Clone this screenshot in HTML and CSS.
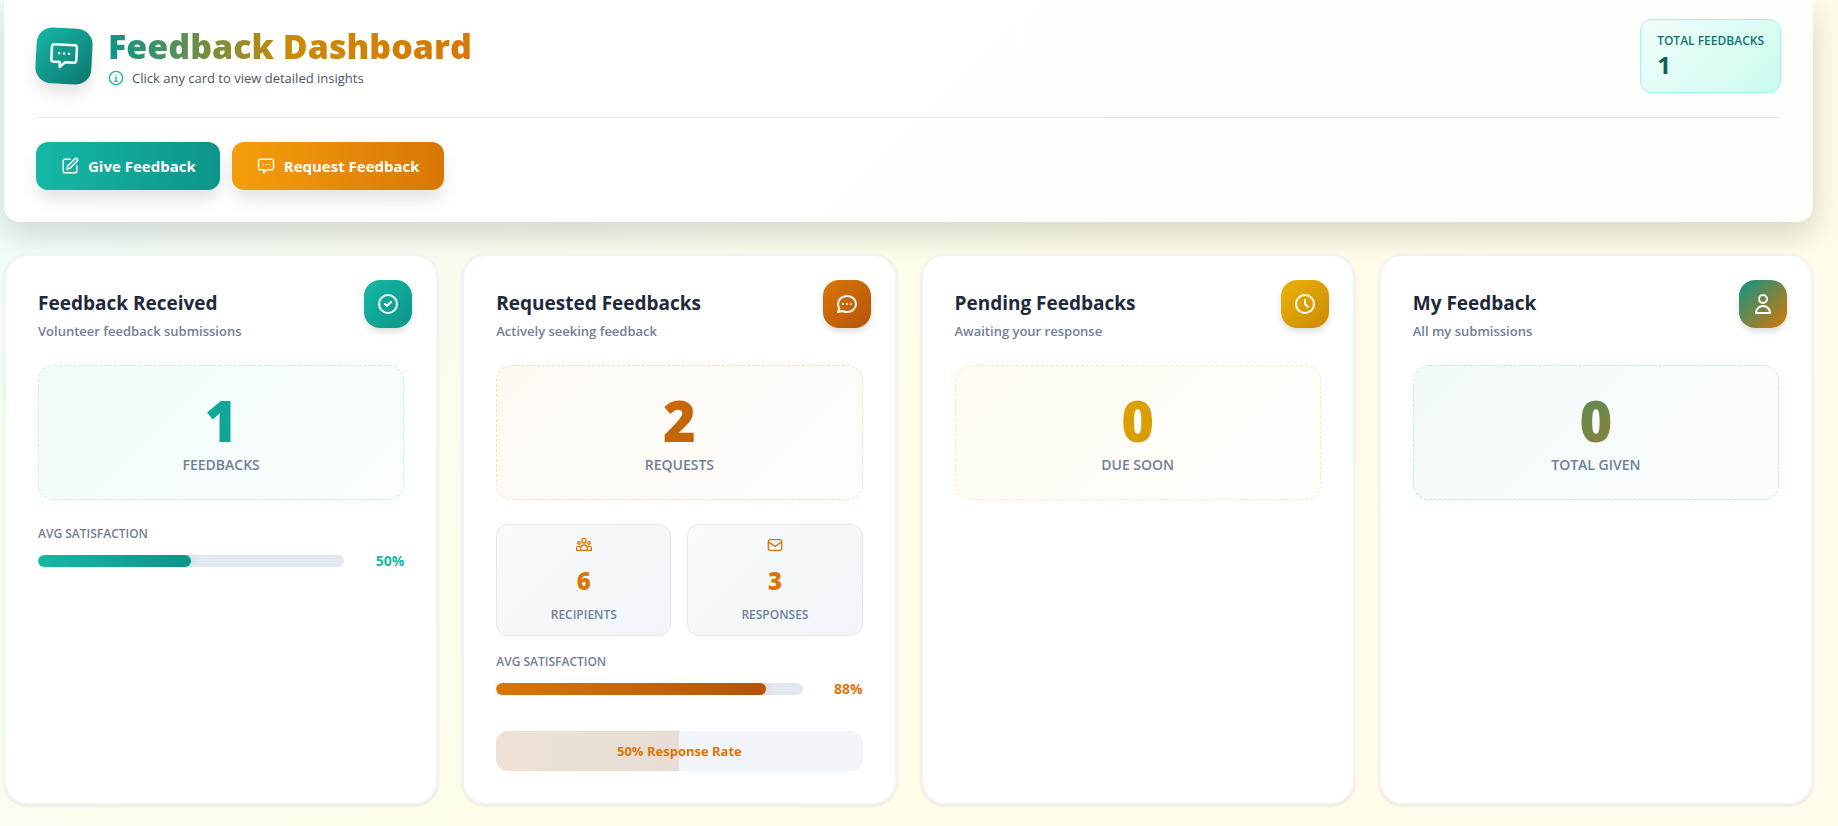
FILE: index.html
```html
<!DOCTYPE html>
<html lang="en">
<head>
    <meta charset="UTF-8">
    <meta name="viewport" content="width=device-width, initial-scale=1.0">
    <title>Feedback Dashboard</title>
    <link rel="stylesheet" href="styles.css">
</head>
<body>
    <!-- Shared icons -->
    <svg class="icon-defs" aria-hidden="true">
        <symbol id="icon-message" viewBox="0 0 24 24">
            <path d="M4 3h16a2 2 0 0 1 2 2v10a2 2 0 0 1-2 2h-7l-4 4v-4H4a2 2 0 0 1-2-2V5a2 2 0 0 1 2-2z"/>
            <path d="M8 10h.01M12 10h.01M16 10h.01"/>
        </symbol>
        <symbol id="icon-info" viewBox="0 0 24 24">
            <circle cx="12" cy="12" r="10"/>
            <path d="M11 11h1v6M10 17h4M12 7.500h.01"/>
        </symbol>
        <symbol id="icon-edit" viewBox="0 0 24 24">
            <path d="M12 3H5a2 2 0 0 0-2 2v14a2 2 0 0 0 2 2h14a2 2 0 0 0 2-2v-7"/>
            <path d="M18.500 2.500a2.100 2.100 0 0 1 3 3L12 15l-4 1 1-4z"/>
        </symbol>
        <symbol id="icon-check" viewBox="0 0 24 24">
            <circle cx="12" cy="12" r="9"/>
            <path d="M9 12l2 2 4-4"/>
        </symbol>
        <symbol id="icon-chat" viewBox="0 0 24 24">
            <path d="M12 4c5 0 9 3.600 9 8s-4 8-9 8c-1.500 0-3-.3-4.200-.9L3 20l1.400-3.700C3.500 15 3 13.600 3 12c0-4.400 4-8 9-8z"/>
            <path d="M8 12h.01M12 12h.01M16 12h.01"/>
        </symbol>
        <symbol id="icon-clock" viewBox="0 0 24 24">
            <circle cx="12" cy="12" r="9"/>
            <path d="M12 8v4l3 3"/>
        </symbol>
        <symbol id="icon-user" viewBox="0 0 24 24">
            <circle cx="12" cy="7" r="4"/>
            <path d="M12 14a7 7 0 0 0-7 7h14a7 7 0 0 0-7-7z"/>
        </symbol>
        <symbol id="icon-team" viewBox="0 0 24 24">
            <rect x="9" y="2" width="6" height="7" rx="3"/>
            <circle cx="4.500" cy="9" r="2"/>
            <circle cx="19.500" cy="9" r="2"/>
            <path d="M7 20v-3a5 5 0 0 1 10 0v3zM7 14H4a3 3 0 0 0-3 3v3h6M17 14h3a3 3 0 0 1 3 3v3h-6"/>
        </symbol>
        <symbol id="icon-mail" viewBox="0 0 24 24">
            <rect x="2" y="4" width="20" height="16" rx="3"/>
            <path d="M3 8l9 6 9-6"/>
        </symbol>
    </svg>

    <main class="dashboard">
        <header class="header">
            <div class="header-top">
                <div class="brand">
                    <div class="brand-icon"><svg class="icon"><use href="#icon-message"/></svg></div>
                    <div class="brand-text">
                        <h1>Feedback Dashboard</h1>
                        <p class="hint"><svg class="icon"><use href="#icon-info"/></svg>Click any card to view detailed insights</p>
                    </div>
                </div>
                <div class="total-badge">
                    <span class="total-label">TOTAL FEEDBACKS</span>
                    <span class="total-value">1</span>
                </div>
            </div>
            <div class="actions">
                <button type="button" class="btn btn-give"><svg class="icon"><use href="#icon-edit"/></svg>Give Feedback</button>
                <button type="button" class="btn btn-request"><svg class="icon"><use href="#icon-message"/></svg>Request Feedback</button>
            </div>
        </header>

        <section class="cards">
            <article class="card received">
                <div class="card-icon"><svg class="icon"><use href="#icon-check"/></svg></div>
                <h2>Feedback Received</h2>
                <p class="card-subtitle">Volunteer feedback submissions</p>
                <div class="count-box">
                    <div class="count">1</div>
                    <div class="count-label">FEEDBACKS</div>
                </div>
                <div class="satisfaction">
                    <div class="small-label">AVG SATISFACTION</div>
                    <div class="bar-row">
                        <div class="bar"><div class="bar-fill" style="width: 50%"></div></div>
                        <span class="percent">50%</span>
                    </div>
                </div>
            </article>

            <article class="card requested">
                <div class="card-icon"><svg class="icon"><use href="#icon-chat"/></svg></div>
                <h2>Requested Feedbacks</h2>
                <p class="card-subtitle">Actively seeking feedback</p>
                <div class="count-box">
                    <div class="count">2</div>
                    <div class="count-label">REQUESTS</div>
                </div>
                <div class="stats">
                    <div class="stat">
                        <svg class="icon"><use href="#icon-team"/></svg>
                        <div class="stat-value">6</div>
                        <div class="small-label">RECIPIENTS</div>
                    </div>
                    <div class="stat">
                        <svg class="icon"><use href="#icon-mail"/></svg>
                        <div class="stat-value">3</div>
                        <div class="small-label">RESPONSES</div>
                    </div>
                </div>
                <div class="satisfaction">
                    <div class="small-label">AVG SATISFACTION</div>
                    <div class="bar-row">
                        <div class="bar"><div class="bar-fill" style="width: 88%"></div></div>
                        <span class="percent">88%</span>
                    </div>
                </div>
                <div class="response-rate">
                    <div class="response-fill" style="width: 50%"></div>
                    <span>50% Response Rate</span>
                </div>
            </article>

            <article class="card pending">
                <div class="card-icon"><svg class="icon"><use href="#icon-clock"/></svg></div>
                <h2>Pending Feedbacks</h2>
                <p class="card-subtitle">Awaiting your response</p>
                <div class="count-box">
                    <div class="count">0</div>
                    <div class="count-label">DUE SOON</div>
                </div>
            </article>

            <article class="card mine">
                <div class="card-icon"><svg class="icon"><use href="#icon-user"/></svg></div>
                <h2>My Feedback</h2>
                <p class="card-subtitle">All my submissions</p>
                <div class="count-box">
                    <div class="count">0</div>
                    <div class="count-label">TOTAL GIVEN</div>
                </div>
            </article>
        </section>
    </main>
</body>
</html>
```
FILE: styles.css
```css
* {
    box-sizing: border-box;
}

body {
    margin: 0;
    min-height: 100vh;
    padding: 0 25px 20px 4px;
    font-family: "Segoe UI", "Open Sans", "Noto Sans", sans-serif;
    color: #1e293b;
    background: linear-gradient(135deg, #f0fdfa 0%, #fefce8 50%, #fffbeb 100%);
}

h1, h2, p {
    margin: 0;
}

.icon-defs {
    display: none;
}

.icon {
    flex: none;
    fill: none;
    stroke: currentColor;
    stroke-width: 2;
    stroke-linecap: round;
    stroke-linejoin: round;
}

/* Header */
.header {
    padding: 19px 32px 32px;
    margin-bottom: 32px;
    border-radius: 0 0 16px 16px;
    background: linear-gradient(135deg, #ffffff 0%, #fefefc 100%);
    box-shadow: 0 12px 32px rgba(0, 0, 0, 0.16);
}

.header-top {
    display: flex;
    justify-content: space-between;
    align-items: center;
    padding-bottom: 24px;
    border-bottom: 1px solid #e5e7eb;
}

.brand {
    display: flex;
    align-items: center;
    gap: 16px;
}

.brand-text {
    padding-top: 4px;
}

.brand-icon {
    display: flex;
    align-items: center;
    justify-content: center;
    width: 56px;
    height: 56px;
    border-radius: 16px;
    color: #fff;
    background: linear-gradient(135deg, #14b8a6, #0f766e);
    box-shadow: 0 10px 15px rgba(0, 0, 0, 0.1);
    transform: rotate(3deg);
}

.brand-icon .icon {
    width: 30px;
    height: 30px;
}

h1 {
    font-size: 34px;
    line-height: 40px;
    font-weight: 800;
    color: transparent;
    background: linear-gradient(90deg, #0d9488, #ca8a04 50%, #d97706);
    -webkit-background-clip: text;
    background-clip: text;
}

.hint {
    display: flex;
    align-items: center;
    gap: 8px;
    font-size: 13px;
    line-height: 24px;
    color: #4b5563;
}

.hint .icon {
    width: 16px;
    height: 16px;
    color: #14b8a6;
}

.total-badge {
    display: flex;
    flex-direction: column;
    padding: 13px 16px 11px;
    border: 1px solid #99f6e4;
    border-radius: 12px;
    background: linear-gradient(135deg, #f0fdfa, #ccfbf1);
}

.total-label {
    font-size: 12px;
    line-height: 16px;
    font-weight: 600;
    color: #0f766e;
}

.total-value {
    font-size: 24px;
    line-height: 32px;
    font-weight: 700;
    color: #115e59;
}

.actions {
    display: flex;
    gap: 12px;
    padding-top: 24px;
}

.btn {
    display: flex;
    align-items: center;
    gap: 8px;
    height: 48px;
    padding: 0 24px;
    border: none;
    border-radius: 12px;
    font-family: inherit;
    font-size: 15px;
    font-weight: 700;
    color: #fff;
    cursor: pointer;
    box-shadow: 0 10px 15px rgba(0, 0, 0, 0.1);
}

.btn .icon {
    width: 18px;
    height: 18px;
    margin: 1px;
}

.btn-give {
    background: linear-gradient(90deg, #14b8a6, #0d9488);
}

.btn-request {
    background: linear-gradient(90deg, #f59e0b, #d97706);
}

/* Cards */
.cards {
    display: grid;
    grid-template-columns: repeat(4, 1fr);
    gap: 24px;
}

.card {
    position: relative;
    padding: 32px;
    border: 2px solid #f1f3f5;
    border-radius: 24px;
    background: #fff;
    box-shadow: 0 1px 3px rgba(0, 0, 0, 0.1);
}

.card-icon {
    position: absolute;
    top: 24px;
    right: 24px;
    display: flex;
    align-items: center;
    justify-content: center;
    width: 48px;
    height: 48px;
    border-radius: 16px;
    color: #fff;
    box-shadow: 0 4px 6px rgba(0, 0, 0, 0.12);
}

.card-icon .icon {
    width: 24px;
    height: 24px;
}

.card h2 {
    font-size: 19px;
    line-height: 30px;
    font-weight: 700;
}

.card-subtitle {
    margin-top: 3px;
    font-size: 13px;
    line-height: 20px;
    font-weight: 600;
    color: #718096;
}

.count-box {
    margin-top: 24px;
    padding: 24px;
    border: 1px dashed;
    border-radius: 16px;
    text-align: center;
}

.count {
    font-size: 56px;
    line-height: 60px;
    font-weight: 800;
    color: transparent;
    -webkit-background-clip: text;
    background-clip: text;
}

.count-label {
    margin-top: 5px;
    font-size: 14px;
    line-height: 20px;
    font-weight: 600;
    color: #718096;
}

.small-label {
    font-size: 12px;
    line-height: 20px;
    font-weight: 600;
    color: #718096;
}

.satisfaction {
    margin-top: 24px;
}

.bar-row {
    display: flex;
    align-items: center;
    gap: 12px;
    margin-top: 7px;
}

.bar {
    flex: 1;
    height: 12px;
    border-radius: 6px;
    overflow: hidden;
    background: #e2e8f0;
}

.bar-fill {
    height: 100%;
    border-radius: 6px;
}

.percent {
    width: 48px;
    font-size: 14px;
    line-height: 20px;
    font-weight: 700;
    text-align: right;
}

.stats {
    display: grid;
    grid-template-columns: 1fr 1fr;
    gap: 16px;
    margin-top: 24px;
}

.stat {
    display: flex;
    flex-direction: column;
    align-items: center;
    padding: 12px 12px 10px;
    border: 1px solid #e2e8f0;
    border-radius: 12px;
    background: linear-gradient(135deg, #f8fafc, #f1f5f9);
    color: #d97706;
}

.stat .icon {
    width: 16px;
    height: 16px;
}

.stat-value {
    margin: 10px 0 6px;
    font-size: 24px;
    line-height: 36px;
    font-weight: 800;
}

.stats + .satisfaction {
    margin-top: 16px;
}

.response-rate {
    position: relative;
    margin-top: 32px;
    border-radius: 12px;
    overflow: hidden;
    background: #f1f5f9;
    font-size: 13px;
    line-height: 40px;
    font-weight: 700;
    text-align: center;
    color: #d97706;
}

.response-rate span {
    position: relative;
}

.response-fill {
    position: absolute;
    inset: 0 auto 0 0;
    opacity: 0.15;
    background: linear-gradient(90deg, #d97706, #b45309);
}

/* Card colours */
.received .card-icon,
.received .count {
    background-image: linear-gradient(135deg, #14b8a6, #0d9488);
}

.received .count-box {
    border-color: #c6f0e8;
    background: linear-gradient(135deg, #f1fbfa, #fafffe);
}

.received .bar-fill {
    background: linear-gradient(90deg, #14b8a6, #0d9488);
    box-shadow: 0 0 10px rgba(20, 184, 166, 0.3);
}

.received .percent {
    color: #14b8a6;
}

.requested .card-icon,
.requested .count {
    background-image: linear-gradient(135deg, #d97706, #b45309);
}

.requested .count-box {
    border-color: #f7dfc0;
    background: linear-gradient(135deg, #fdf8f2, #fffdfb);
}

.requested .bar-fill {
    background: linear-gradient(90deg, #d97706, #b45309);
    box-shadow: 0 0 10px rgba(217, 119, 6, 0.3);
}

.requested .percent {
    color: #d97706;
}

.pending .card-icon,
.pending .count {
    background-image: linear-gradient(135deg, #eab308, #ca8a04);
}

.pending .count-box {
    border-color: #f9ebc0;
    background: linear-gradient(135deg, #fffbf3, #fffefb);
}

.mine .card-icon,
.mine .count {
    background-image: linear-gradient(135deg, #0d9488, #d97706);
}

.mine .count-box {
    border-color: #c5e6e1;
    background: linear-gradient(135deg, #f2f9f9, #fafdfe);
}

@media (max-width: 1100px) {
    .cards {
        grid-template-columns: repeat(2, 1fr);
    }
}
```
